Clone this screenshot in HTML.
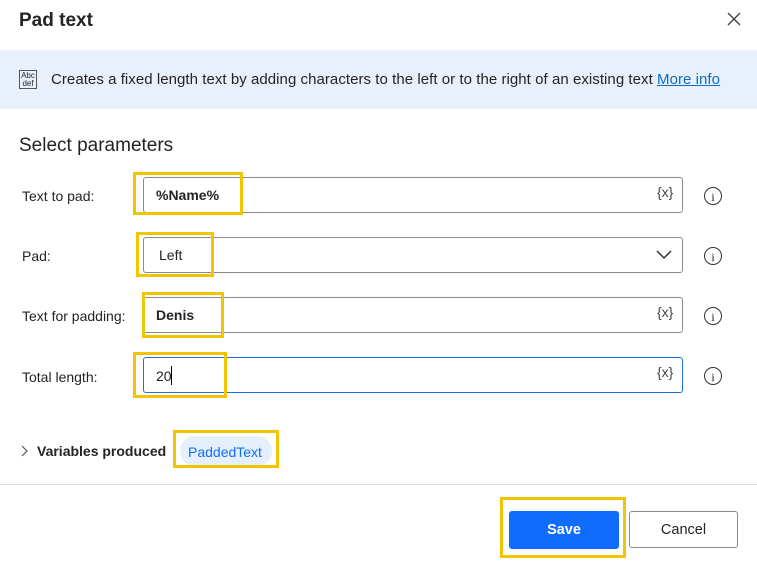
<!DOCTYPE html>
<html><head><style>
body{margin:0;width:757px;height:565px;background:#fff;font-family:"Liberation Sans",sans-serif;color:#242424;position:relative;overflow:hidden}
.a{position:absolute}
.lbl{font-size:14px;left:22px}
.inp{position:absolute;left:143px;width:540px;height:36px;border:1px solid #8a8a8a;border-radius:3px;box-sizing:border-box}
.val{position:absolute;left:156px;font-size:14px;font-weight:bold}
.yb{position:absolute;border:3px solid #f5c400;box-sizing:border-box}
.fx{position:absolute;left:657px;font-size:14px;color:#444}
.info{position:absolute;left:704px;width:18px;height:18px;border:1.5px solid #333;border-radius:50%;font-size:12px;text-align:center;line-height:18px;font-family:"Liberation Serif",serif;box-sizing:border-box}
</style></head><body>
<div class="a" style="left:19px;top:10px;font-size:19px;font-weight:bold">Pad text</div>
<svg class="a" style="left:727px;top:12px" width="14" height="14"><path d="M1 1L13 13M13 1L1 13" stroke="#444" stroke-width="1.4"/></svg>
<div class="a" style="left:0;top:50px;width:757px;height:59px;background:#e8f0fc"></div>
<div class="a" style="left:19px;top:70px;width:18px;height:19px;border:1px solid #555;font-size:8px;line-height:8px;text-align:center;box-sizing:border-box;padding-top:1px">Abc<br>def</div>
<div class="a" style="left:51px;top:71px;font-size:15px;letter-spacing:0.05px">Creates a fixed length text by adding characters to the left or to the right of an existing text <span style="color:#0f6cbd;text-decoration:underline">More info</span></div>
<div class="a" style="left:19px;top:135px;font-size:19px">Select parameters</div>

<div class="a lbl" style="top:188px">Text to pad:</div>
<div class="inp" style="top:177px"></div><div class="val" style="top:187px">%Name%</div><div class="fx" style="top:184px">{x}</div><div class="info" style="top:187px">i</div>
<div class="yb" style="left:133px;top:172px;width:110px;height:43px"></div>

<div class="a lbl" style="top:248px">Pad:</div>
<div class="inp" style="top:237px"></div><div class="val" style="top:247px;left:159px;font-weight:normal">Left</div>
<svg class="a" style="left:656px;top:250px" width="16" height="10"><path d="M1 1L8 8L15 1" stroke="#333" stroke-width="1.5" fill="none"/></svg>
<div class="info" style="top:247px">i</div>
<div class="yb" style="left:136px;top:232px;width:78px;height:45px"></div>

<div class="a lbl" style="top:308px">Text for padding:</div>
<div class="inp" style="top:297px"></div><div class="val" style="top:307px">Denis</div><div class="fx" style="top:304px">{x}</div><div class="info" style="top:307px">i</div>
<div class="yb" style="left:142px;top:292px;width:82px;height:46px"></div>

<div class="a lbl" style="top:369px">Total length:</div>
<div class="inp" style="top:357px;border-color:#1f6fe0"></div><div class="val" style="top:368px;font-weight:normal">20</div><div class="a" style="left:171px;top:366px;width:1px;height:19px;background:#000"></div><div class="fx" style="top:364px">{x}</div><div class="info" style="top:367px">i</div>
<div class="yb" style="left:133px;top:352px;width:94px;height:46px"></div>

<svg class="a" style="left:21px;top:445px" width="8" height="12"><path d="M1 1L6 6L1 11" stroke="#555" stroke-width="1.2" fill="none"/></svg>
<div class="a" style="left:37px;top:443px;font-size:14px;font-weight:bold">Variables produced</div>
<div class="a" style="left:180px;top:436px;width:92px;height:30px;border-radius:15px;background:#e6effc"></div>
<div class="a" style="left:188px;top:444px;font-size:14px;color:#0f6cff">PaddedText</div>
<div class="yb" style="left:173px;top:430px;width:106px;height:38px"></div>

<div class="a" style="left:0;top:484px;width:757px;height:1px;background:#e0e0e0"></div>
<div class="a" style="left:509px;top:511px;width:110px;height:38px;background:#0f6cff;border-radius:3px;color:#fff;font-weight:bold;font-size:14.5px;text-align:center;line-height:38px">Save</div>
<div class="yb" style="left:500px;top:497px;width:126px;height:61px"></div>
<div class="a" style="left:629px;top:511px;width:109px;height:37px;border:1px solid #8a8a8a;border-radius:3px;box-sizing:border-box;font-size:14.5px;text-align:center;line-height:37px">Cancel</div>
</body></html>
